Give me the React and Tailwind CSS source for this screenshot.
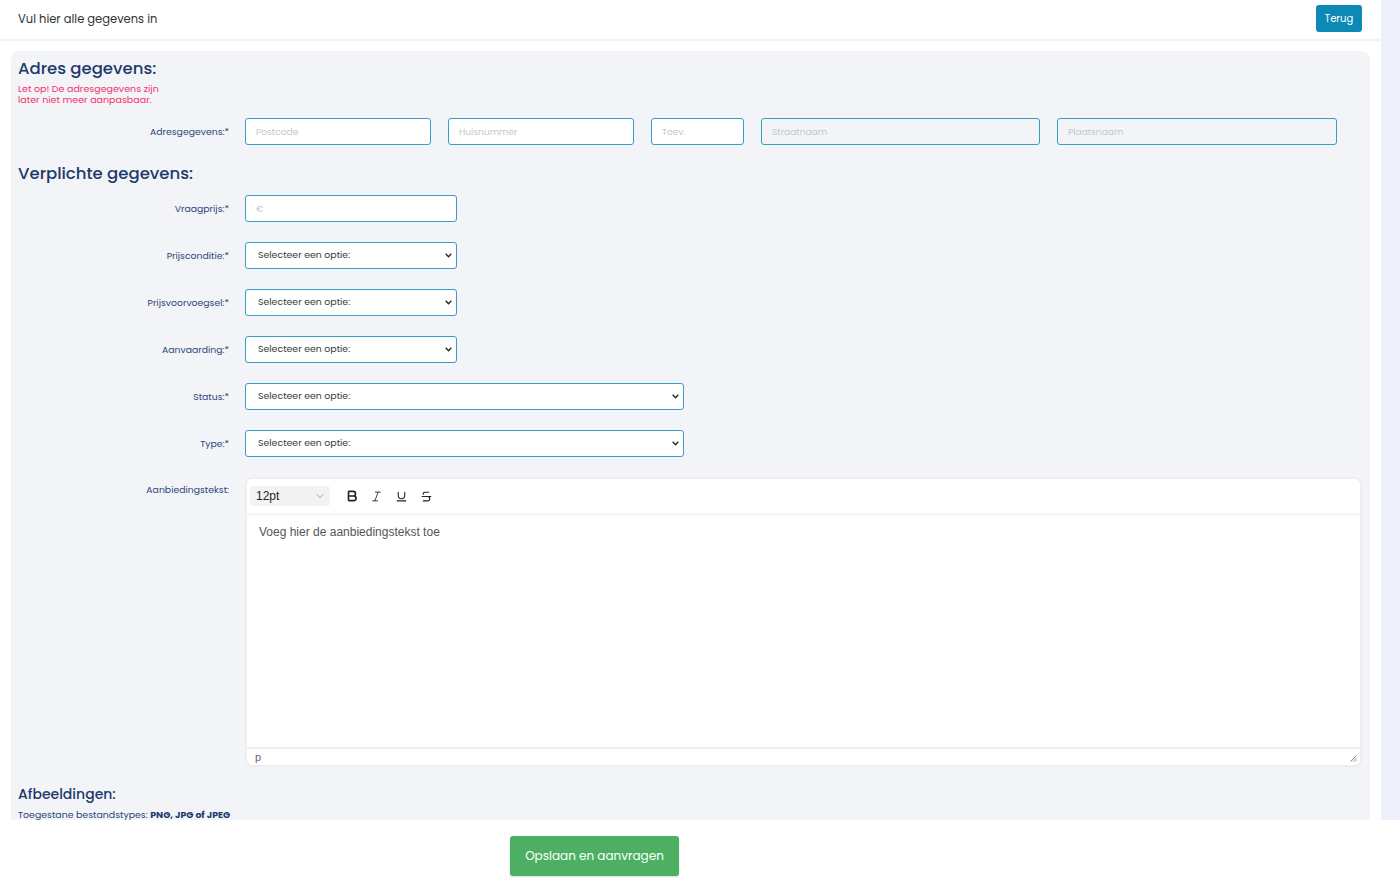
import { Bold, Italic, Underline, Strikethrough, ChevronDown } from "lucide-react";

const font = { fontFamily: "Poppins, 'Open Sans', Lato, sans-serif" };
const sys = { fontFamily: "'Liberation Sans', Arial, sans-serif" };

function Label({ children, top = false }) {
  return (
    <div
      className={`w-[227px] shrink-0 pr-[16px] text-right text-[9.3px] text-[#2a4676] ${
        top ? "pt-[6px]" : ""
      }`}
    >
      {children}
    </div>
  );
}

function Select({ wide }) {
  return (
    <div
      className={`relative flex h-[27px] items-center rounded-[3px] border border-[#3a9cc4] bg-white pl-[12px] ${
        wide ? "w-[439px]" : "w-[212px]"
      }`}
    >
      <span className="text-[9.4px] text-[#3a3a3a]">Selecteer een optie:</span>
      <svg
        className="absolute right-[4px] top-[10px]"
        width="7"
        height="5"
        viewBox="0 0 7 5"
        fill="none"
        stroke="#222"
        strokeWidth="1.3"
      >
        <path d="M0.7 0.8 L3.5 3.7 L6.3 0.8" />
      </svg>
    </div>
  );
}

function Input({ placeholder, w, disabled }) {
  return (
    <div
      className={`flex h-[27px] items-center rounded-[3px] border border-[#3a9cc4] pl-[10px] text-[9.1px] text-[#c4c8cf] ${w} ${
        disabled ? "bg-[#f3f4f6]" : "bg-white"
      }`}
    >
      {placeholder}
    </div>
  );
}

export default function App() {
  return (
    <div className="flex h-[891px] flex-col overflow-hidden bg-white" style={font}>
      <div className="flex h-[820px] min-h-0">
        <div className="flex min-w-0 flex-1 flex-col">
          <div className="flex h-[41px] shrink-0 items-center justify-between border-b-2 border-[#f1f2f4] pl-[18px] pr-[19px]">
            <span className="text-[11.5px] text-[#333]">Vul hier alle gegevens in</span>
            <button className="mt-[-3px] h-[27px] w-[46px] rounded-[3px] bg-[#0c8ab5] text-[10px] text-white">
              Terug
            </button>
          </div>
          <div className="min-h-0 flex-1 overflow-hidden px-[11px] pt-[10px]">
            <div className="h-full rounded-t-[8px] bg-[#f3f4f8] pl-[7px] pr-[8px] pt-[7px]">
              <h2 className="text-[16.5px] leading-[22px] font-medium text-[#1d3a6b]">Adres gegevens:</h2>
              <p className="mt-[3px] text-[9.5px] leading-[11px] text-[#f2326a]">
                Let op! De adresgegevens zijn
                <br />
                later niet meer aanpasbaar.
              </p>
              <div className="mt-[13px] flex items-center">
                <Label>Adresgegevens:*</Label>
                <div className="flex gap-[17px]">
                  <Input placeholder="Postcode" w="w-[186px]" />
                  <Input placeholder="Huisnummer" w="w-[186px]" />
                  <Input placeholder="Toev." w="w-[93px]" />
                  <Input placeholder="Straatnaam" w="w-[279px]" disabled />
                  <Input placeholder="Plaatsnaam" w="w-[280px]" disabled />
                </div>
              </div>
              <h2 className="mt-[18px] text-[16.5px] leading-[22px] font-medium text-[#1d3a6b]">
                Verplichte gegevens:
              </h2>
              <div className="mt-[10px] flex flex-col gap-[20px]">
                <div className="flex items-center">
                  <Label>Vraagprijs:*</Label>
                  <Input placeholder="€" w="w-[212px]" />
                </div>
                <div className="flex items-center">
                  <Label>Prijsconditie:*</Label>
                  <Select />
                </div>
                <div className="flex items-center">
                  <Label>Prijsvoorvoegsel:*</Label>
                  <Select />
                </div>
                <div className="flex items-center">
                  <Label>Aanvaarding:*</Label>
                  <Select />
                </div>
                <div className="flex items-center">
                  <Label>Status:*</Label>
                  <Select wide />
                </div>
                <div className="flex items-center">
                  <Label>Type:*</Label>
                  <Select wide />
                </div>
                <div className="flex items-start">
                  <Label top>Aanbiedingstekst:</Label>
                  <div className="flex h-[290px] flex-1 flex-col overflow-hidden rounded-[7px] border-2 border-[#eeeeee] bg-white">
                    <div className="relative z-10 flex h-[34px] shrink-0 items-center gap-[4px] pl-[3px] shadow-[0_2px_3px_rgba(0,0,0,0.06)]" style={sys}>
                      <div className="flex h-[20px] w-[80px] items-center justify-between rounded-[3px] bg-[#f2f3f5] pl-[6px] pr-[4px] text-[12px] text-[#222]">
                        12pt
                        <ChevronDown size={12} strokeWidth={1.5} className="text-[#888]" />
                      </div>
                      <div className="ml-[7px] flex w-[21px] justify-center"><Bold size={14} strokeWidth={2.8} className="text-[#222]" /></div>
                      <div className="flex w-[21px] justify-center"><Italic size={13} strokeWidth={1.6} className="text-[#222]" /></div>
                      <div className="flex w-[21px] justify-center"><Underline size={13} strokeWidth={2} className="text-[#222]" /></div>
                      <div className="flex w-[21px] justify-center"><Strikethrough size={13} strokeWidth={2} className="text-[#222]" /></div>
                    </div>
                    <div className="flex-1 px-[12px] pt-[10px] text-[12px] text-[#555]" style={sys}>
                      Voeg hier de aanbiedingstekst toe
                    </div>
                    <div className="relative flex h-[18px] shrink-0 items-center border-t-2 border-[#eeeeee] pl-[8px] text-[11px] text-[#666]" style={sys}>
                      p
                      <svg className="absolute bottom-[3px] right-[3px]" width="7" height="7" viewBox="0 0 7 7" stroke="#777" strokeWidth="0.9">
                        <path d="M0.5 6.5 L6.5 0.5 M3 6.5 L6.5 3 M5.5 6.5 L6.5 5.5" />
                      </svg>
                    </div>
                  </div>
                </div>
              </div>
              <h2 className="mt-[17px] text-[14px] leading-[20px] font-medium text-[#1d3a6b]">Afbeeldingen:</h2>
              <p className="mt-[4px] text-[9.4px] leading-[13px] text-[#2a4676]">
                Toegestane bestandstypes: <b className="font-bold text-[#1d3a6b]">PNG, JPG of JPEG</b>
              </p>
            </div>
          </div>
        </div>
        <div className="w-[19px] shrink-0 bg-[#eef1fa]" />
      </div>
      <div className="flex flex-1 items-start pl-[510px] pt-[16px]">
        <button className="h-[40px] w-[169px] rounded-[3px] bg-[#4caf62] text-[12px] text-white shadow-[0_1px_2px_rgba(0,0,0,0.15)]">
          Opslaan en aanvragen
        </button>
      </div>
    </div>
  );
}
